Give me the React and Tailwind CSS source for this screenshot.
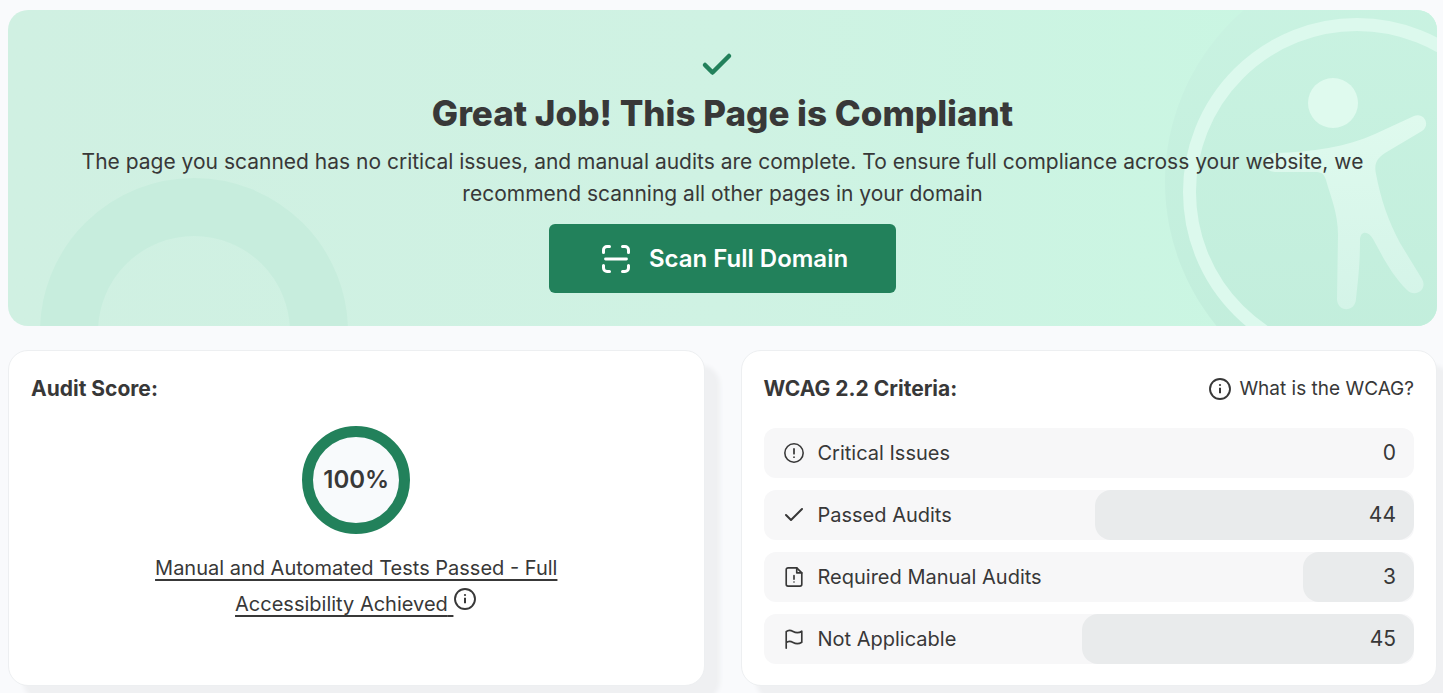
import { Check } from "lucide-react";

const InfoIcon = () => (
  <svg viewBox="0 0 24 24" className="size-6" fill="none" stroke="currentColor" strokeWidth="1.9" strokeLinecap="round" aria-hidden="true">
    <circle cx="12" cy="12" r="10" />
    <path d="M12 10.8v5.4" strokeLinecap="butt" strokeWidth="2" />
    <path d="M12 8h.01" strokeWidth="2.2" />
  </svg>
);

const AlertIcon = () => (
  <svg viewBox="0 0 24 24" className="size-[22px]" fill="none" stroke="currentColor" strokeWidth="1.7" strokeLinecap="round" aria-hidden="true">
    <circle cx="12" cy="12" r="10" />
    <path d="M12 7.5v5.200M12 16.5h.01" strokeWidth="1.9" />
  </svg>
);

const ScanIcon = () => (
  <svg viewBox="0 0 28 28" className="size-7" fill="none" stroke="currentColor" strokeWidth="3" strokeLinecap="round" strokeLinejoin="round" aria-hidden="true">
    <path d="M1.5 7.5V5a3.5 3.5 0 0 1 3.5-3.5h2.5M20.5 1.5H23A3.5 3.5 0 0 1 26.5 5v2.5M26.5 20.5V23a3.5 3.5 0 0 1-3.5 3.5h-2.5M7.5 26.5H5A3.5 3.5 0 0 1 1.5 23v-2.5" />
    <path d="M3.5 14h21" strokeWidth="2.8" />
  </svg>
);

const FileAlertIcon = () => (
  <svg viewBox="0 0 24 24" className="size-[22px]" fill="none" stroke="currentColor" strokeWidth="1.8" strokeLinecap="round" strokeLinejoin="round" aria-hidden="true">
    <path d="M15 2H5.5A2 2 0 0 0 3.5 4v16a2 2 0 0 0 2 2h13a2 2 0 0 0 2-2V7.5z" />
    <path d="M15 2v5.5h5.5M12 10.5v4M12 17.5h.01" />
  </svg>
);

const FlagIcon = () => (
  <svg viewBox="0 0 24 24" className="size-[22px]" fill="none" stroke="currentColor" strokeWidth="1.8" strokeLinecap="round" strokeLinejoin="round" aria-hidden="true">
    <path d="M3.5 22V4c2-1.8 4.500-2 7.500-.2 3.5 2 6.5 1.700 9.500-.3v12c-3 2-6 2.300-9.500.3-3-1.800-5.500-1.600-7.500.2" />
  </svg>
);

const criteria = [
  { label: "Critical Issues", value: 0, fill: 0, icon: <AlertIcon /> },
  { label: "Passed Audits", value: 44, fill: 49, icon: <Check size={24} strokeWidth={2} aria-hidden="true" /> },
  { label: "Required Manual Audits", value: 3, fill: 17, icon: <FileAlertIcon /> },
  { label: "Not Applicable", value: 45, fill: 51, icon: <FlagIcon /> },
];

const card = "rounded-[20px] border border-[#edeff1] bg-white px-[22px] pt-5 pb-[21px] shadow-[15px_15px_4px_#eff0f2]";

function Banner() {
  return (
    <section className="relative overflow-hidden rounded-[20px] bg-linear-to-r from-[#d0f0e2] via-[#cff2e3] to-[#c8f7e2] px-14 pt-[37px] pb-[33px] text-center">
      <svg viewBox="0 0 310 150" className="absolute bottom-0 left-8 h-[150px] w-[310px]" fill="none" aria-hidden="true">
        <circle cx="154" cy="156" r="125" stroke="#c7eddd" strokeWidth="58" />
      </svg>
      <svg viewBox="0 0 280 316" className="absolute top-0 right-0 h-[316px] w-[280px]" fill="none" aria-hidden="true">
        <defs>
          <linearGradient id="disc" x1="0" y1="0" x2="0" y2="1">
            <stop offset="0" stopColor="#caf3e2" />
            <stop offset="1" stopColor="#c1eddb" />
          </linearGradient>
          <linearGradient id="figure" x1="0" y1="0" x2="0" y2="1">
            <stop offset="0" stopColor="#dffaee" />
            <stop offset="1" stopColor="#d4f4e8" />
          </linearGradient>
        </defs>
        <circle cx="235" cy="172" r="227" fill="url(#disc)" />
        <circle cx="200" cy="182" r="167.5" stroke="#dcf9ed" strokeWidth="13" />
        <circle cx="176" cy="93" r="25" fill="#dffaee" />
        <path fill="url(#figure)" d="M118 143C155 142 190 137 218 124L257 106C267 102 274 115 265 121L228 143C219 149 217 155 219 164C224 190 231 210 243 233L265 269C271 280 258 288 250 280C234 264 226 247 216 229C211 220 203 221 203 230C203 255 201 270 199 289C198 303 180 302 180 289L181 225C181 203 174 188 169 170C167 164 165 162 158 162L118 162C105 162 105 143 118 143Z" />
      </svg>
      <div className="relative flex flex-col items-center">
        <Check className="mr-3 text-[#22815b]" size={36} strokeWidth={3} aria-hidden="true" />
        <h1 className="mt-2 text-[35px] leading-[44px] font-extrabold">Great Job! This Page is Compliant</h1>
        <p className="mt-[11px] text-[21px] leading-8">
          The page you scanned has no critical issues, and manual audits are complete. To ensure full compliance across your website, we recommend scanning all other pages in your domain
        </p>
        <button type="button" className="mt-[14px] flex h-[69px] items-center gap-[19px] rounded-md bg-[#22815b] pr-12 pl-[53px] text-2xl font-semibold text-white">
          <ScanIcon />
          Scan Full Domain
        </button>
      </div>
    </section>
  );
}

function AuditScore() {
  return (
    <section className={card}>
      <h2 className="text-[21px] leading-9 font-bold">Audit Score:</h2>
      <div className="mt-[19px] flex flex-col items-center">
        <div className="flex size-[108px] items-center justify-center rounded-full border-[11px] border-[#22815b] bg-[#f8fafc] text-2xl font-semibold">
          100%
        </div>
        <p className="mt-4 max-w-[420px] text-center text-[20px] leading-9">
          <a href="#score-details" className="underline decoration-2 underline-offset-4">
            Manual and Automated Tests Passed - Full Accessibility Achieved{" "}
          </a>
          <button type="button" aria-label="About this score" className="align-baseline">
            <InfoIcon />
          </button>
        </p>
      </div>
    </section>
  );
}

function Criteria() {
  return (
    <section className={card}>
      <div className="flex items-center justify-between">
        <h2 className="text-[21px] leading-9 font-bold">WCAG 2.2 Criteria:</h2>
        <a href="#wcag" className="flex items-center gap-[7px] text-[19px]">
          <InfoIcon />
          What is the WCAG?
        </a>
      </div>
      <ul className="mt-[21px] flex flex-col gap-3">
        {criteria.map((c) => (
          <li key={c.label} className="relative flex h-[50px] items-center rounded-xl bg-[#f7f7f8] px-[18px] text-[20px]">
            <div className="absolute inset-y-0 right-0 rounded-2xl bg-[#e9ebec]" style={{ width: `${c.fill}%` }} />
            <span className="relative flex w-6 justify-center">{c.icon}</span>
            <span className="relative ml-3 flex-1">{c.label}</span>
            <span className="relative text-[21px]">{c.value}</span>
          </li>
        ))}
      </ul>
    </section>
  );
}

export default function App() {
  return (
    <main className="min-h-screen overflow-hidden bg-[#f9fafc] pt-2.5 pr-1.5 pb-2 pl-2 font-['Inter',sans-serif] text-[#383838]">
      <Banner />
      <div className="mt-6 grid grid-cols-2 gap-9">
        <AuditScore />
        <Criteria />
      </div>
    </main>
  );
}
